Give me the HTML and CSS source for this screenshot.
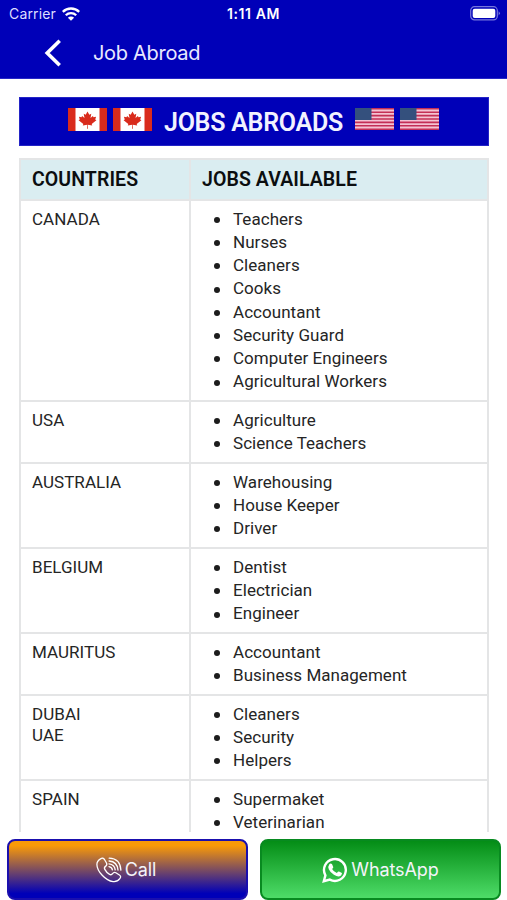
FILE: index.html
```html
<!DOCTYPE html>
<html lang="en">
<head>
<meta charset="utf-8">
<title>Job Abroad</title>
<link rel="stylesheet" href="styles.css">
</head>
<body>
<svg class="defs" aria-hidden="true">
  <symbol id="canada" viewBox="0 0 39 23">
    <path fill="#fff" d="M0 0h39v23H0z"/>
    <path fill="#d92b1c" d="M0 0h7.5v23H0zM31.500 0H39v23h-7.500zM19.500 3.500l1.800 3.200 2-1-.8 4.400 2.400-2.200.6 1.300 2.600-.4-.9 2.700 1.200.7-4.700 3.700.5 1.500-4.400-.6.100 4h-.8l.1-4-4.400.6.500-1.500-4.700-3.700 1.200-.7-.9-2.700 2.600.4.600-1.300 2.400 2.200-.8-4.400 2 1z"/>
  </symbol>
  <symbol id="usa" viewBox="0 0 39 22">
    <path fill="#f4c3d2" d="M0 0h39v22H0z"/>
    <path stroke="#c42f56" stroke-width="1.600" d="M0 .8h39M0 4.200h39M0 7.600h39M0 11h39M0 14.400h39M0 17.800h39M0 21.200h39"/>
    <path fill="#34507d" d="M0 0h16.500v12H0z"/>
  </symbol>
</svg>
<div class="screen">
  <header class="top">
    <div class="status">
      <div class="carrier"><span>Carrier</span>
        <svg width="18" height="14" viewBox="0 0 18 14" fill="none" stroke="#fff" stroke-width="2.300"><path d="M.8 4.900a11.600 11.600 0 0 1 16.400 0M3.800 8.200a7.400 7.400 0 0 1 10.400 0"/><path fill="#fff" stroke="none" d="M5.900 10.700a4.400 4.400 0 0 1 6.200 0L9 13.800z"/></svg>
      </div>
      <div class="time">1:11 AM</div>
      <svg class="battery" width="31" height="15" viewBox="0 0 31 15"><rect x=".7" y=".7" width="26.600" height="13.200" rx="3.800" fill="none" stroke="#7777dc" stroke-width="1.200"/><rect x="2.700" y="2.700" width="22.600" height="9.200" rx="2" fill="#fff"/><path fill="#7777dc" d="M28.600 5.200q2.600 2.100 0 4.200z"/></svg>
    </div>
    <div class="nav">
      <svg width="18" height="28" viewBox="0 0 18 28" fill="none" stroke="#fff" stroke-width="3.600"><path d="M15.700 1.800L3.200 14l12.500 12.200"/></svg>
      <h1>Job Abroad</h1>
    </div>
  </header>
  <main>
    <div class="banner">
      <svg class="flag"><use href="#canada"/></svg><svg class="flag"><use href="#canada"/></svg>
      <h2>JOBS ABROADS</h2>
      <svg class="flag us"><use href="#usa"/></svg><svg class="flag us"><use href="#usa"/></svg>
    </div>
    <div class="jobs">
      <div class="row head"><div>COUNTRIES</div><div>JOBS AVAILABLE</div></div>
      <div class="row"><div>CANADA</div><ul><li>Teachers</li><li>Nurses</li><li>Cleaners</li><li>Cooks</li><li>Accountant</li><li>Security Guard</li><li>Computer Engineers</li><li>Agricultural Workers</li></ul></div>
      <div class="row"><div>USA</div><ul><li>Agriculture</li><li>Science Teachers</li></ul></div>
      <div class="row"><div>AUSTRALIA</div><ul><li>Warehousing</li><li>House Keeper</li><li>Driver</li></ul></div>
      <div class="row"><div>BELGIUM</div><ul><li>Dentist</li><li>Electrician</li><li>Engineer</li></ul></div>
      <div class="row"><div>MAURITUS</div><ul><li>Accountant</li><li>Business Management</li></ul></div>
      <div class="row"><div>DUBAI<br>UAE</div><ul><li>Cleaners</li><li>Security</li><li>Helpers</li></ul></div>
      <div class="row"><div>SPAIN</div><ul><li>Supermaket</li><li>Veterinarian</li></ul></div>
    </div>
  </main>
  <footer>
    <div class="btn call">
      <svg width="26" height="26" viewBox="0 0 26 26" fill="none" stroke="#fff" stroke-width="1.300" stroke-linecap="round" stroke-linejoin="round"><path d="M4.500 1.900Q6.900.2 8.600 2.700L10.500 6q1 2-1 3.400-1.700 1.200-.7 3 1.700 3.300 4.800 5 1.800.9 3-.8 1.300-1.900 3.300-.8l3.500 2.200q2.200 1.500.4 3.700-2.600 3.400-6.700 2.900Q11.500 23.900 6.200 18.200 1 12.700.9 7.400.9 4.100 4.500 1.900z"/><path d="M13.200 1.200q11 .4 11.700 11.900M13.100 4q8.200.6 8.900 9M13 6.800q5.600.7 6.200 6.100M13 9.600q3 .5 3.400 3.200"/></svg>
      <span>Call</span>
    </div>
    <div class="btn whatsapp">
      <svg width="26" height="26" viewBox="0 0 26 26"><path fill="none" stroke="#fff" stroke-width="2.400" d="M1.800 24.200l1.600-5.900A10.900 10.900 0 1 1 7.800 22.600z"/><path fill="#fff" d="M7.200 7.600q.8-1.300 2.200-.9.500.1.700.6l1.100 2.600q.2.500-.2 1l-.9 1.200q1.600 2.900 4.700 4l1.200-1.400q.4-.5 1-.2l2.500 1.200q.6.300.5.900-.3 2.500-3 2.800-2.100.2-5.100-1.600-3.600-2.200-5.100-5.600-1.100-2.500.4-4.600z"/></svg>
      <span>WhatsApp</span>
    </div>
  </footer>
</div>
</body>
</html>
```

FILE: styles.css
```css
* { box-sizing: border-box; margin: 0; padding: 0; }
body { background: #fff; font-family: Roboto, sans-serif; color: #252525; }
svg { display: block; flex: none; }
.defs { position: absolute; width: 0; height: 0; }
.screen { display: flex; flex-direction: column; height: 900px; overflow: hidden; }
.top { flex: none; height: 79px; background: #0000b8; color: #fff; border-bottom: 1px solid #2828c8; font-family: Inter, sans-serif; }
.status { display: grid; grid-template-columns: 1fr auto 1fr; align-items: center; height: 27px; padding: 0 6px 0 9px; }
.carrier { display: flex; align-items: center; gap: 6px; font-size: 14px; letter-spacing: .15px; color: #dedeff; }
.time { font-size: 14px; font-weight: 600; letter-spacing: .6px; margin-right: 3px; }
.battery { justify-self: end; }
.nav { display: flex; align-items: center; height: 52px; padding-left: 44px; gap: 31px; }
h1 { font-size: 20px; font-weight: 400; letter-spacing: -.3px; color: #e9e9ff; }
main { flex: 1; min-height: 0; overflow: hidden; padding: 18px 18px 0 19px; }
.banner { display: flex; align-items: center; height: 49px; background: #0000b8; border: 1px solid #2424c6; padding-left: 48px; }
.flag { width: 39px; height: 23px; margin: -5px 6px 0 0; }
.flag.us { height: 22px; }
h2 { font-size: 25px; font-weight: 600; letter-spacing: -.27px; color: #f2f2ff; margin: 2px 12.500px 0 6px; white-space: nowrap; }
.jobs { margin-top: 12px; border: 2px solid #e4e5e6; border-bottom: 0; font-size: 17px; letter-spacing: .04px; }
.row { display: grid; grid-template-columns: 170px 1fr; border-bottom: 2px solid #e4e5e6; }
.row > div { padding: 7.600px 11px 0; line-height: 21px; }
.row > :first-child { border-right: 2px solid #e4e5e6; }
.row ul { padding: 6.700px 0 6.650px 42px; line-height: 23.250px; list-style: none; }
li { display: flex; align-items: center; }
li::before { content: ""; flex: none; width: 6px; height: 6px; margin: 1px 13px 0 -19px; border-radius: 50%; background: #1c1c1c; }
.head { height: 41px; background: #daedf1; color: #0b0e10; font-size: 19.500px; font-weight: 600; letter-spacing: .08px; }
.row.head > div { padding-top: 8.500px; }
footer { flex: none; display: grid; grid-template-columns: 1fr 1fr; gap: 12px; height: 68px; padding: 7px 6px 0 7px; }
.btn { height: 61px; display: flex; align-items: center; justify-content: center; gap: 3px; border-radius: 8px; color: #f4f4fa; font: 18px Inter, sans-serif; letter-spacing: -.1px; }
.call { border: 2px solid #1a0fae; background: linear-gradient(#f99a08 8%, #0000b8 92%); padding-right: 3px; }
.whatsapp { border: 2px solid #088a20; background: linear-gradient(#048d16, #4edc68); }
```
